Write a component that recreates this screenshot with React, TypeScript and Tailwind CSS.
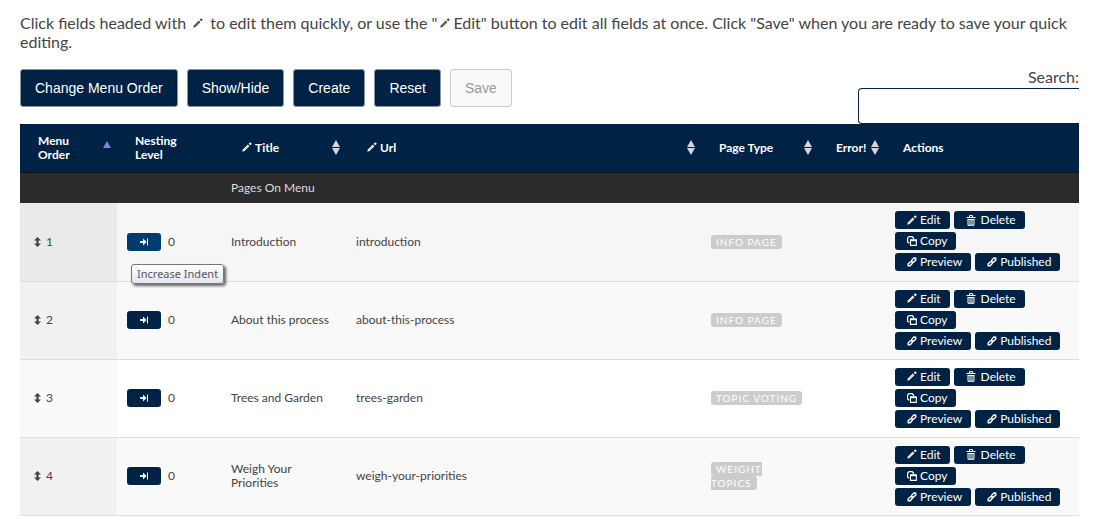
import { useState } from 'react'
import type { ReactNode } from 'react'

interface MenuPage {
  order: number
  level: number
  title: string
  url: string
  type: string
}

const pages: MenuPage[] = [
  { order: 1, level: 0, title: 'Introduction', url: 'introduction', type: 'Info Page' },
  { order: 2, level: 0, title: 'About this process', url: 'about-this-process', type: 'Info Page' },
  { order: 3, level: 0, title: 'Trees and Garden', url: 'trees-garden', type: 'Topic Voting' },
  { order: 4, level: 0, title: 'Weigh Your Priorities', url: 'weigh-your-priorities', type: 'Weight Topics' },
]

function PencilIcon() {
  return (
    <svg width="10" height="10" viewBox="0 0 10 10" className="mb-px inline-block shrink-0 align-baseline" aria-hidden="true">
      <path d="M0.3 9.7 L0.9 7.5 L5.8 2.6 L7.4 4.2 L2.5 9.1 Z" fill="currentColor" />
      <path d="M2.2 7.8 L5.8 4.2" stroke="#8a95a5" strokeWidth="0.6" />
      <path d="M6.7 1.7 L8.2 0.2 L9.8 1.8 L8.3 3.3 Z" fill="currentColor" />
    </svg>
  )
}

function TrashIcon() {
  return (
    <svg width="12" height="11" viewBox="0 0 12 11" className="shrink-0" fill="none" stroke="currentColor" aria-hidden="true">
      <path d="M0.5 2.5 H9.5 M3.5 2 V0.6 H6.5 V2 M1.5 4.5 H8.5 M2 4.5 V10.3 H8 V4.5 M4 4.5 V10 M6 4.5 V10" />
    </svg>
  )
}

function CopyIcon() {
  return (
    <svg width="10" height="10" viewBox="0 0 10 10" className="shrink-0" fill="none" stroke="currentColor" aria-hidden="true">
      <path d="M2.5 7 H1.5 L0.6 6 V2 L2 0.6 H5.2 L6.5 2 V3" strokeWidth="1.2" />
      <path d="M3.5 4 H9.3 V9.4 H3.5 Z" strokeWidth="1.1" />
      <path d="M3 4.3 H9.8" strokeWidth="1.8" />
    </svg>
  )
}

function LinkIcon() {
  return (
    <svg width="10" height="10" viewBox="0 0 10 10" className="shrink-0" fill="none" stroke="currentColor" strokeWidth="1.4" aria-hidden="true">
      <path d="M4.6 4.9 L4.6 3.4 L6.8 1 L8.7 1.2 L8.8 3 L6.6 5.2 L5.4 5.2" />
      <path d="M5.2 4.8 L5.3 6.5 L3.2 8.8 L1.2 8.8 L1.1 7 L3.2 4.9 Z" />
    </svg>
  )
}

function IndentIcon() {
  return (
    <svg width="9" height="8" viewBox="0 0 9 8" fill="none" stroke="currentColor" aria-hidden="true">
      <path d="M0 4 H4" strokeWidth="1.8" />
      <path d="M3 0.6 L6.6 4 L3 7.4 Z" fill="currentColor" stroke="none" />
      <path d="M7.5 0.5 V7.5" />
    </svg>
  )
}

function MoveIcon() {
  return (
    <svg width="7" height="10" viewBox="0 0 7 10" fill="currentColor" aria-hidden="true">
      <path d="M3.5 0 L7 3.4 H4.6 V6.6 H7 L3.5 10 L0 6.6 H2.4 V3.4 H0 Z" />
    </svg>
  )
}

function SortIcon({ active = false }: { active?: boolean }) {
  return (
    <svg width="8" height="15" viewBox="0 0 8 15" className="shrink-0" aria-hidden="true">
      {active ? (
        <path d="M4 1 L8 8 H0 Z" fill="#8080e0" />
      ) : (
        <path d="M4 0 L8 7 H0 Z M0 8 H8 L4 15 Z" fill="#d3d6de" />
      )}
    </svg>
  )
}

function ToolbarButton({ children, disabled = false }: { children: ReactNode; disabled?: boolean }) {
  return (
    <button
      type="button"
      disabled={disabled}
      className="h-[38px] rounded-[3px] border border-[#8c939c] bg-[#002244] px-3.5 font-['Liberation_Sans',sans-serif] text-sm text-white disabled:border-[#cccccc] disabled:bg-[#f9f9f9] disabled:text-[#999999]"
    >
      {children}
    </button>
  )
}

function ActionButton({ icon, children }: { icon: ReactNode; children: ReactNode }) {
  return (
    <button type="button" className="flex h-[18px] items-center gap-[3px] rounded-[3px] bg-[#002244] pr-[9px] pl-3 leading-4 text-white">
      {icon}
      {children}
    </button>
  )
}

export default function App() {
  const [search, setSearch] = useState<string>('')

  return (
    <div className="px-5 pt-[13px] font-[Lato,sans-serif] text-xs leading-[14px] text-[#444444]">
      <p className="text-base leading-[19px]">
        Click fields headed with <span className="mx-[3px]"><PencilIcon /></span> to edit them quickly, or use the "<span className="mx-[3px]"><PencilIcon /></span>Edit" button to edit all fields at once. Click "Save" when you are ready to save your quick editing.
      </p>

      <div className="mt-[18px] flex items-start justify-between">
        <div className="flex gap-[9px]">
          <ToolbarButton>Change Menu Order</ToolbarButton>
          <ToolbarButton>Show/Hide</ToolbarButton>
          <ToolbarButton>Create</ToolbarButton>
          <ToolbarButton>Reset</ToolbarButton>
          <ToolbarButton disabled>Save</ToolbarButton>
        </div>
        <label className="flex flex-col items-end gap-[3px] text-base leading-4">
          Search:
          <input
            type="search"
            value={search}
            onChange={(e) => setSearch(e.target.value)}
            className="h-9 w-[221px] rounded-l-[4px] border border-r-0 border-[#002244] bg-white px-2 outline-none"
          />
        </label>
      </div>

      <table className="w-full table-fixed border-collapse text-left">
        <colgroup>
          <col className="w-[97px]" />
          <col className="w-[104px]" />
          <col className="w-[125px]" />
          <col />
          <col className="w-[117px]" />
          <col className="w-[67px]" />
          <col className="w-[194px]" />
        </colgroup>
        <thead className="bg-[#002244] text-white">
          <tr className="h-12 border-b border-[#111111]">
            <th className="pr-1.5 pl-[18px]">
              <div className="flex items-center justify-between">
                <span className="w-10">Menu Order</span>
                <SortIcon active />
              </div>
            </th>
            <th className="px-[18px]">Nesting Level</th>
            <th className="pr-1.5 pl-[21px]">
              <div className="flex items-center justify-between">
                <span className="flex items-center gap-[3px]"><PencilIcon />Title</span>
                <SortIcon />
              </div>
            </th>
            <th className="pr-1.5 pl-[21px]">
              <div className="flex items-center justify-between">
                <span className="flex items-center gap-[3px]"><PencilIcon />Url</span>
                <SortIcon />
              </div>
            </th>
            <th className="pr-1.5 pl-[18px]">
              <div className="flex items-center justify-between">
                Page Type
                <SortIcon />
              </div>
            </th>
            <th className="pr-1.5 pl-[18px]">
              <div className="flex items-center justify-between">
                Error!
                <SortIcon />
              </div>
            </th>
            <th className="px-[18px]">Actions</th>
          </tr>
        </thead>
        <tbody>
          <tr className="h-[31px] bg-[#2b2b2b] text-[#dddddd]">
            <td colSpan={2}></td>
            <td colSpan={5} className="px-2.5">Pages On Menu</td>
          </tr>
          {pages.map((page, index) => (
            <tr
              key={page.order}
              className={`h-[78px] border-b border-[#dddddd] ${index === 0 ? 'bg-[#f6f6f6]' : index % 2 === 1 ? 'bg-[#f9f9f9]' : 'bg-white'}`}
            >
              <td className={`px-[14px] ${index === 0 ? 'bg-[#eaeaea]' : index % 2 === 1 ? 'bg-[#f1f1f1]' : 'bg-[#fafafa]'}`}>
                <div className="flex items-center gap-[5px]">
                  <MoveIcon />
                  {page.order}
                </div>
              </td>
              <td className="px-2.5">
                <div className="relative flex items-center gap-[7px]">
                  <button
                    type="button"
                    aria-label="Increase Indent"
                    className={`flex h-[18px] w-[34px] items-center justify-center rounded-[3px] text-white ${index === 0 ? 'bg-[#003b6f]' : 'bg-[#002244]'}`}
                  >
                    <IndentIcon />
                  </button>
                  {page.level}
                  {index === 0 && (
                    <div className="absolute top-[31px] left-1 rounded-[3px] border border-[#767676] bg-linear-to-b from-white to-[#e4e5f0] px-[5px] py-px font-['Noto_Sans',sans-serif] text-[11px] leading-4 whitespace-nowrap text-[#575757] shadow-[2px_2px_3px_rgba(0,0,0,0.6)]">
                      Increase Indent
                    </div>
                  )}
                </div>
              </td>
              <td className="px-2.5">{page.title}</td>
              <td className="px-2.5">{page.url}</td>
              <td className="px-2.5">
                <span className="rounded-[3px] bg-[#cccccc] px-[5px] py-px text-[10px] tracking-[1px] text-white uppercase">{page.type}</span>
              </td>
              <td></td>
              <td className="px-2.5">
                <div className="flex flex-col gap-[3px] pb-px">
                  <div className="flex gap-1">
                    <ActionButton icon={<PencilIcon />}>Edit</ActionButton>
                    <ActionButton icon={<TrashIcon />}>Delete</ActionButton>
                  </div>
                  <div className="flex">
                    <ActionButton icon={<CopyIcon />}>Copy</ActionButton>
                  </div>
                  <div className="flex gap-1">
                    <ActionButton icon={<LinkIcon />}>Preview</ActionButton>
                    <ActionButton icon={<LinkIcon />}>Published</ActionButton>
                  </div>
                </div>
              </td>
            </tr>
          ))}
        </tbody>
      </table>
    </div>
  )
}
